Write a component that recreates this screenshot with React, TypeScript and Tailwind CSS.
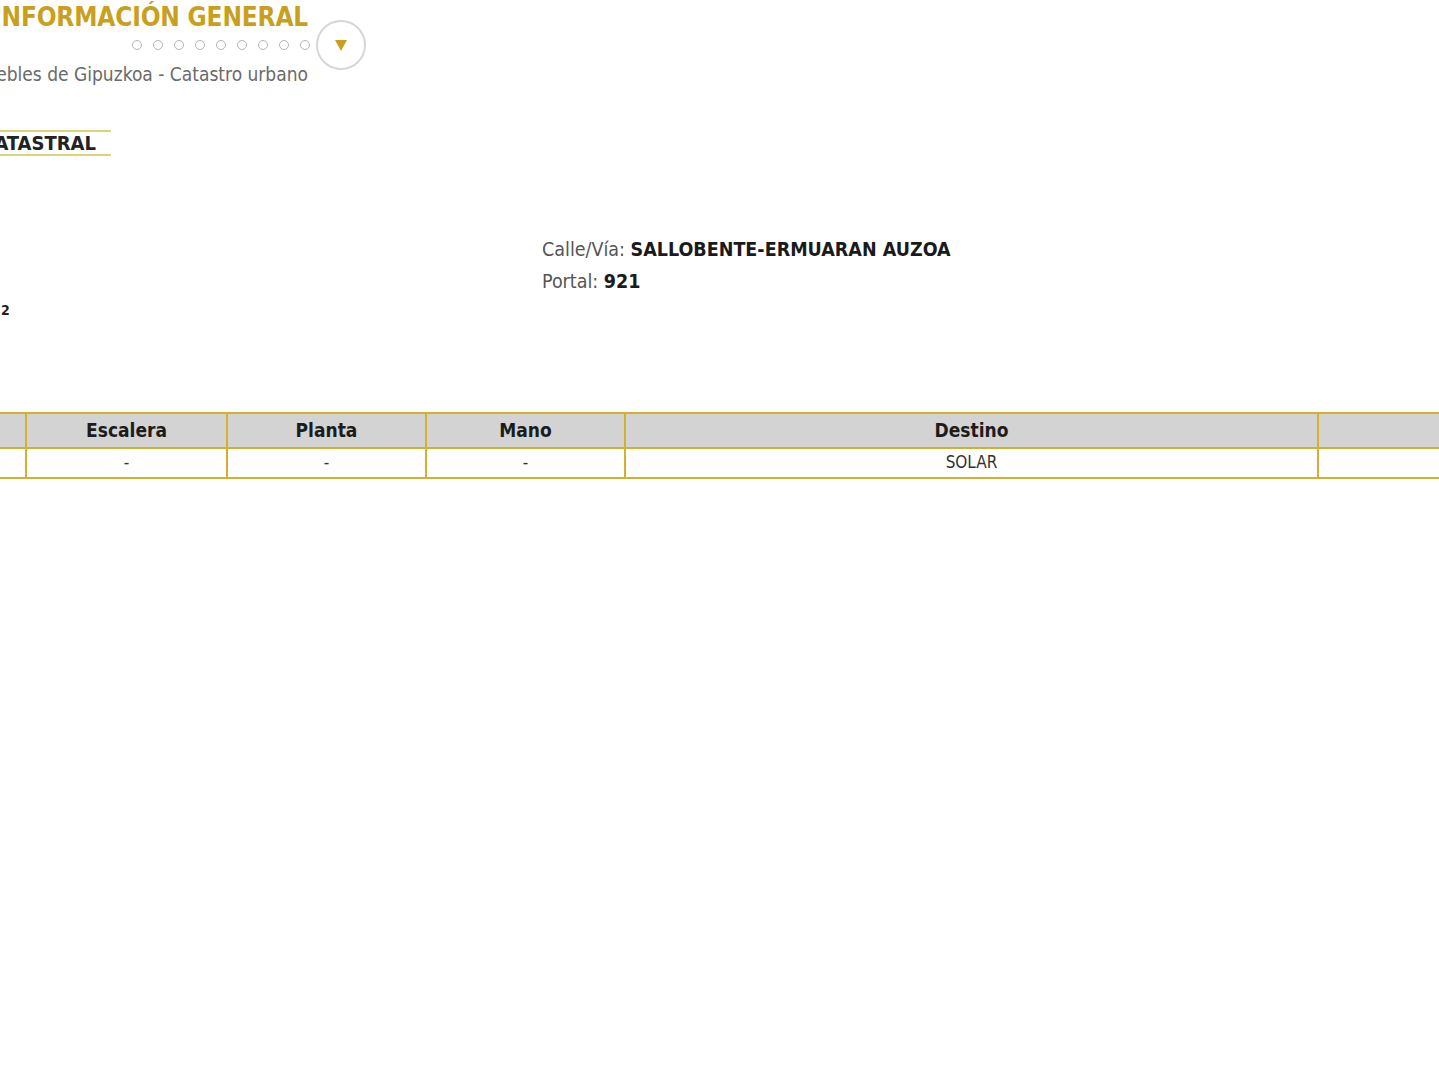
import React from 'react';

const font = { fontFamily: 'Tahoma, "DejaVu Sans Condensed", "DejaVu Sans", sans-serif' };

function Dots() {
  return (
    <div className="flex items-center gap-[11px]">
      {Array.from({ length: 9 }).map((_, i) => (
        <span key={i} className="block w-[10px] h-[10px] rounded-full border border-[#b5b5b5]" />
      ))}
    </div>
  );
}

export default function App() {
  const cols = ['', 'Escalera', 'Planta', 'Mano', 'Destino', ''];
  const row = ['', '-', '-', '-', 'SOLAR', ''];
  const widths = ['w-[100px]', 'w-[201px]', 'w-[199px]', 'w-[199px]', 'w-[693px]', 'w-[200px]'];

  return (
    <div className="w-[1439px] h-[1080px] overflow-hidden bg-white relative" style={font}>
      <div className="ml-[-120px] w-[486px] pt-[2px]">
        <div className="flex flex-col items-end pr-[58px]">
          <h1 className="text-[26px] leading-[30px] font-bold text-[#c9a01e] tracking-[-0.2px] whitespace-nowrap">
            INFORMACIÓN GENERAL
          </h1>
        </div>
        <div className="flex items-center justify-end mt-[-12px]">
          <Dots />
          <div className="ml-[6px] w-[50px] h-[50px] rounded-full border-2 border-[#d6d6d6] flex items-center justify-center">
            <svg width="14" height="14" viewBox="0 0 14 14">
              <path d="M1 2 L13 2 L7 13 Z" fill="#c9a01e" />
            </svg>
          </div>
        </div>
        <p className="mt-[-7px] pr-[58px] text-right text-[19px] leading-[22px] text-[#6a6a6a] whitespace-nowrap">
          Bienes inmuebles de Gipuzkoa - Catastro urbano
        </p>
      </div>

      <div className="ml-[-120px] mt-[45px] w-[231px] border-t-2 border-b-2 border-[#e0d27a] py-[1px]">
        <p className="text-right pr-[15px] text-[20px] leading-[20px] font-bold text-[#222] whitespace-nowrap">DATOS CATASTRAL</p>
      </div>

      <div className="flex mt-[78px]">
        <div className="w-[542px] pt-[66px]">
          <p className="text-[14px] font-bold text-[#222] ml-[-50px] pl-[51px]">2</p>
        </div>
        <div className="text-[19.5px] leading-[32px] text-[#555]">
          <p>Calle/Vía: <span className="font-bold text-[#1a1a1a]">SALLOBENTE-ERMUARAN AUZOA</span></p>
          <p>Portal: <span className="font-bold text-[#1a1a1a]">921</span></p>
        </div>
      </div>

      <table className="table-fixed border-collapse ml-[-75px] mt-[91px] w-[1592px]">
        <thead>
          <tr className="bg-[#d3d3d3]">
            {cols.map((c, i) => (
              <th key={i} className={`${widths[i]} h-[35px] border-2 border-[#d4b12c] text-[19px] font-bold text-[#1c1c1c] text-center`}>
                {c}
              </th>
            ))}
          </tr>
        </thead>
        <tbody>
          <tr>
            {row.map((c, i) => (
              <td key={i} className="h-[30px] border-2 border-[#d4b12c] text-[17px] text-[#333] text-center font-normal">
                {c}
              </td>
            ))}
          </tr>
        </tbody>
      </table>
    </div>
  );
}
